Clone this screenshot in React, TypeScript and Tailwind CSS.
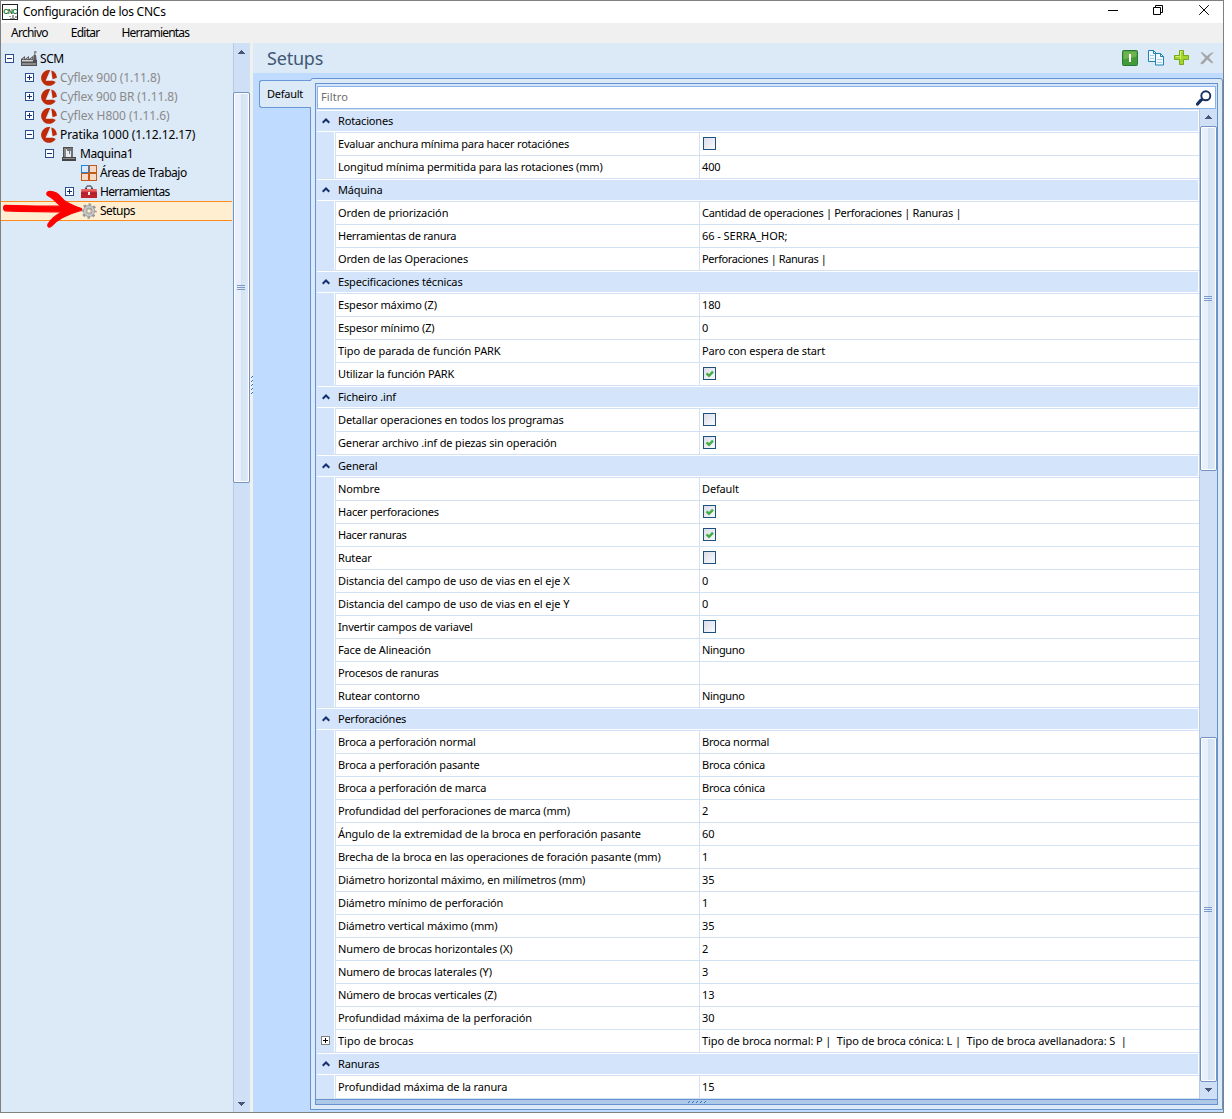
import type { ReactNode } from "react";

type Row = {
  label: string;
  value?: string;
  check?: boolean;
  header?: boolean;
  expand?: boolean;
  labelClass?: string;
  valueClass?: string;
};

const rows: Row[] = [
  { label: "Rotaciones", header: true },
  {
    label: "Evaluar anchura mínima para hacer rotaciónes",
    check: false,
    labelClass: "tracking-[-0.22px]",
  },
  { label: "Longitud mínima permitida para las rotaciones (mm)", value: "400" },
  { label: "Máquina", header: true },
  {
    label: "Orden de priorización",
    value: "Cantidad de operaciones | Perforaciones | Ranuras |",
    labelClass: "tracking-[-0.1px]",
    valueClass: "tracking-[-0.3px] word-spacing-0",
  },
  {
    label: "Herramientas de ranura",
    value: "66 - SERRA_HOR;",
    labelClass: "tracking-[-0.27px]",
    valueClass: "tracking-[-0.05px]",
  },
  {
    label: "Orden de las Operaciones",
    value: "Perforaciones | Ranuras |",
    valueClass: "tracking-[-0.4px]",
  },
  { label: "Especificaciones técnicas", header: true },
  { label: "Espesor máximo (Z)", value: "180" },
  { label: "Espesor mínimo (Z)", value: "0" },
  {
    label: "Tipo de parada de función PARK",
    value: "Paro con espera de start",
    labelClass: "tracking-[-0.07px]",
    valueClass: "tracking-[-0.11px]",
  },
  { label: "Utilizar la función PARK", check: true },
  { label: "Ficheiro .inf", header: true },
  { label: "Detallar operaciones en todos los programas", check: false },
  { label: "Generar archivo .inf de piezas sin operación", check: true },
  { label: "General", header: true },
  { label: "Nombre", value: "Default" },
  { label: "Hacer perforaciones", check: true, labelClass: "tracking-[-0.2px]" },
  { label: "Hacer ranuras", check: true, labelClass: "tracking-[-0.35px]" },
  { label: "Rutear", check: false },
  {
    label: "Distancia del campo de uso de vias en el eje X",
    value: "0",
    labelClass: "tracking-[-0.08px]",
  },
  {
    label: "Distancia del campo de uso de vias en el eje Y",
    value: "0",
    labelClass: "tracking-[-0.08px]",
  },
  { label: "Invertir campos de variavel", check: false, labelClass: "tracking-[-0.2px]" },
  { label: "Face de Alineación", value: "Ninguno", valueClass: "tracking-[-0.35px]" },
  { label: "Procesos de ranuras", value: "", labelClass: "tracking-[-0.22px]" },
  {
    label: "Rutear contorno",
    value: "Ninguno",
    labelClass: "tracking-[-0.2px]",
    valueClass: "tracking-[-0.35px]",
  },
  { label: "Perforaciónes", header: true, labelClass: "tracking-[-0.25px]" },
  { label: "Broca a perforación normal", value: "Broca normal", valueClass: "tracking-[-0.22px]" },
  { label: "Broca a perforación pasante", value: "Broca cónica", valueClass: "tracking-[-0.2px]" },
  { label: "Broca a perforación de marca", value: "Broca cónica", valueClass: "tracking-[-0.2px]" },
  { label: "Profundidad del perforaciones de marca (mm)", value: "2" },
  {
    label: "Ángulo de la extremidad de la broca en perforación pasante",
    value: "60",
    labelClass: "tracking-[-0.11px]",
  },
  {
    label: "Brecha de la broca en las operaciones de foración pasante (mm)",
    value: "1",
    labelClass: "tracking-[-0.12px]",
  },
  {
    label: "Diámetro horizontal máximo, en milímetros (mm)",
    value: "35",
    labelClass: "tracking-[-0.19px]",
  },
  { label: "Diámetro mínimo de perforación", value: "1" },
  { label: "Diámetro vertical máximo (mm)", value: "35" },
  {
    label: "Numero de brocas horizontales (X)",
    value: "2",
    labelClass: "tracking-[-0.12px]",
  },
  { label: "Numero de brocas laterales (Y)", value: "3" },
  { label: "Número de brocas verticales (Z)", value: "13" },
  { label: "Profundidad máxima de la perforación", value: "30" },
  {
    label: "Tipo de brocas",
    value: "Tipo de broca normal: P |  Tipo de broca cónica: L |  Tipo de broca avellanadora: S  |",
    expand: true,
    labelClass: "tracking-[0px]",
    valueClass: "tracking-[-0.1px]",
  },
  { label: "Ranuras", header: true },
  { label: "Profundidad máxima de la ranura", value: "15", labelClass: "tracking-[-0.15px]" },
];

function Expander({ open, gray }: { open?: boolean; gray?: boolean }) {
  return (
    <svg width="9" height="9" viewBox="0 0 9 9" shapeRendering="crispEdges">
      <rect x="0.5" y="0.5" width="8" height="8" fill="#fff" stroke={gray ? "#808080" : "#2a4f90"} />
      <path d="M2 4h5v1H2z" fill={gray ? "#000" : "#15306b"} />
      {!open && <path d="M4 2h1v5H4z" fill={gray ? "#000" : "#15306b"} />}
    </svg>
  );
}

function FactoryIcon() {
  return (
    <svg width="16" height="16" viewBox="0 0 16 16">
      <path d="M13 0h2.500v2h-1v2H13z" fill="#8e8e8e" />
      <path d="M12.500 4H15l.8 6h-3.600z" fill="#5b5b5b" />
      <path d="M0 8l4-3v3l4-3v3l4-3v4h4v6H0z" fill="#505050" />
      <path d="M1 8.200l2.300-1.700v1.700zM5 8.200l2.300-1.700v1.700zM9 8.200l2.300-1.700v1.700z" fill="#c5c5c5" />
      <path d="M1 9h11v1.500H1z" fill="#d0d0d0" />
      <path d="M1 12h14v2H1z" fill="#8c8c8c" />
    </svg>
  );
}

function ScmIcon() {
  return (
    <svg width="16" height="16" viewBox="0 0 16 16">
      <path d="M9.200.1A7.900 7.900 0 1 0 14.800 12L12 10.800H4.600z" fill="#bd2b08" />
      <path d="M10.300.4A8 8 0 0 1 15.900 7.800L11.600 9.300z" fill="#bd2b08" />
      <path d="M9.600 3.800L5.800 10.200 11 9.900z" fill="#f3f6fb" />
    </svg>
  );
}

function MachineIcon() {
  return (
    <svg width="16" height="16" viewBox="0 0 16 16">
      <path d="M2 1h10v2H5v8H2z" fill="#505050" />
      <path d="M3 2h2v9H3z" fill="#858585" />
      <path d="M5 3h4v8H5z" fill="#e9edf1" />
      <path d="M6 2h5v3H9v3H8V5H6z" fill="#777" />
      <path d="M10 2h2v9h-2z" fill="#707070" />
      <path d="M1 11h14v4H1z" fill="#454545" />
      <path d="M2 12h12v1H2z" fill="#8b8b8b" />
    </svg>
  );
}

function AreasIcon() {
  return (
    <svg width="16" height="16" viewBox="0 0 16 16" shapeRendering="crispEdges" fill="#f8d9c5" stroke="#c45a16">
      <path d="M8.500.5h7v7h-7zM.5 8.500h7v7h-7zM8.500 8.500h7v7h-7z" />
      <path d="M.5.5h7v7h-7z" fill="#d7eaff" stroke="#2483db" />
    </svg>
  );
}

function ToolboxIcon() {
  return (
    <svg width="16" height="14" viewBox="0 0 16 14">
      <path d="M5 4V2.500L6.500 1h3L11 2.500V4" fill="none" stroke="#5f686e" strokeWidth="1.300" />
      <path d="M4 3h2v1H4zM10 3h2v1h-2z" fill="#444" />
      <path d="M.5 4h15l.5 4H0z" fill="#dd4444" />
      <path d="M1 4.500h14v1H1z" fill="#ef8580" />
      <path d="M0 8h16v5H0z" fill="#c0222b" />
      <path d="M0 7.500h16v.8H0z" fill="#8e1019" />
      <path d="M7 7h2v3H7z" fill="#eee" />
    </svg>
  );
}

function GearIcon() {
  return (
    <svg width="16" height="16" viewBox="0 0 16 16" fill="none">
      <circle cx="8" cy="8" r="6.500" stroke="#999" strokeWidth="2.400" strokeDasharray="2.500 2.600" strokeDashoffset="1.250" />
      <circle cx="8" cy="8" r="4.300" stroke="#919191" strokeWidth="3.400" />
      <circle cx="8" cy="8" r="4.300" stroke="#c6c6c6" strokeWidth="2.200" />
      <circle cx="8" cy="8" r="2.100" fill="#fff0d4" stroke="#8b8b8b" strokeWidth=".7" />
    </svg>
  );
}

type Node = {
  label: string;
  icon: ReactNode;
  pad: string;
  text: string;
  state?: "open" | "closed";
  dim?: boolean;
  selected?: boolean;
};

const nodes: Node[] = [
  { label: "SCM", icon: <FactoryIcon />, pad: "pl-1", state: "open", text: "tracking-[-0.4px]" },
  { label: "Cyflex 900 (1.11.8)", icon: <ScmIcon />, pad: "pl-6", state: "closed", dim: true, text: "tracking-[-0.08px]" },
  { label: "Cyflex 900 BR (1.11.8)", icon: <ScmIcon />, pad: "pl-6", state: "closed", dim: true, text: "tracking-[-0.12px]" },
  { label: "Cyflex H800 (1.11.6)", icon: <ScmIcon />, pad: "pl-6", state: "closed", dim: true, text: "tracking-[-0.05px]" },
  { label: "Pratika 1000 (1.12.12.17)", icon: <ScmIcon />, pad: "pl-6", state: "open", text: "tracking-[-0.1px]" },
  { label: "Maquina1", icon: <MachineIcon />, pad: "pl-11", state: "open", text: "tracking-[-0.4px]" },
  { label: "Áreas de Trabajo", icon: <AreasIcon />, pad: "pl-16", text: "tracking-[-0.45px]" },
  { label: "Herramientas", icon: <ToolboxIcon />, pad: "pl-16", state: "closed", text: "tracking-[-0.65px]" },
  { label: "Setups", icon: <GearIcon />, pad: "pl-16", selected: true, text: "tracking-[-0.55px]" },
];

function TreeNode({ node }: { node: Node }) {
  return (
    <li
      className={`flex items-center ${node.pad} ${
        node.selected ? "h-5 border-y border-[#ff8c1a] bg-[#ffefd0]" : "h-[19px]"
      }`}
    >
      <span className="w-4 shrink-0">{node.state && <Expander open={node.state === "open"} />}</span>
      <span className="flex w-[19px] shrink-0 items-center">{node.icon}</span>
      <span
        className={`text-[12px] leading-[18px] whitespace-pre ${node.dim ? "text-[#8a8a8a]" : "text-black"} ${node.text}`}
      >
        {node.label}
      </span>
    </li>
  );
}

function Arrow({ down }: { down?: boolean }) {
  return (
    <svg width="7" height="4" viewBox="0 0 7 4" fill="#495677" shapeRendering="crispEdges">
      {down ? <path d="M0 0h7v1H6v1H5v1H4v1H3V3H2V2H1V1H0z" /> : <path d="M3 0h1v1h1v1h1v1h1v1H0V3h1V2h1V1h1z" />}
    </svg>
  );
}

function Thumb({ size }: { size: string }) {
  return (
    <div
      className={`flex w-[17px] shrink-0 items-center justify-center rounded-[2px] border border-[#7593c0] bg-[linear-gradient(90deg,#fff_1px,#eaf1fc_1px,#e6effb_7px,#d3e2f3_7px,#dfe9f7_14px,#fff_14px)] pr-px shadow-[inset_0_1px_#fff,inset_0_-1px_#fff] ${size}`}
    >
      <div className="h-[5px] w-2 bg-[repeating-linear-gradient(#7c99c9_0_1px,transparent_1px_2px)]" />
    </div>
  );
}

function CheckBox({ checked }: { checked: boolean }) {
  return (
    <svg width="13" height="13" viewBox="0 0 13 13">
      <defs>
        <linearGradient id="box" x1="0" y1="0" x2="1" y2="1">
          <stop offset="0" stopColor="#d9dde9" />
          <stop offset="1" stopColor="#fbfbfd" />
        </linearGradient>
      </defs>
      <rect x="0.5" y="0.5" width="12" height="12" fill="url(#box)" stroke="#1c5180" />
      {checked && <path d="M3.600 6.400l2.400 2.400 4-4.200" fill="none" stroke="#45ad45" strokeWidth="2.500" />}
    </svg>
  );
}

function GridRow({ row }: { row: Row }) {
  if (row.header) {
    return (
      <div className="flex h-[23px] border-t border-[#d3e1f5] bg-white py-px pr-px">
        <div className="flex grow items-center bg-[#d4e5fb]">
          <span className="flex w-[21px] justify-center pr-[3px]">
            <svg width="8" height="6" viewBox="0 0 8 6" fill="none" stroke="#15306b" strokeWidth="2">
              <path d="M.7 4.800L4 1.500l3.300 3.300" />
            </svg>
          </span>
          <span className={row.labelClass}>{row.label}</span>
        </div>
      </div>
    );
  }
  return (
    <div className="flex h-[23px] bg-white">
      <div className="flex w-[17px] shrink-0 items-center justify-center bg-[#d4e5fb]">
        {row.expand && <Expander gray />}
      </div>
      <div className="ml-px flex grow border-t border-l border-[#d3e1f5]">
        <div
          className={`flex w-[364px] shrink-0 items-center border-r border-[#d3e1f5] pl-0.5 whitespace-pre ${row.labelClass ?? ""}`}
        >
          {row.label}
        </div>
        <div className={`flex items-center pl-0.5 whitespace-pre ${row.valueClass ?? ""}`}>
          {row.check !== undefined ? (
            <span className="pb-px pl-px">
              <CheckBox checked={row.check} />
            </span>
          ) : (
            row.value
          )}
        </div>
      </div>
    </div>
  );
}

function TitleBar() {
  return (
    <div className="flex h-[22px] shrink-0 items-center bg-white">
      <div className="ml-px flex h-4 w-4 flex-col border border-[#222] bg-white">
        <span className="-mx-px pt-[3px] text-center font-['Liberation_Sans'] text-[7px] leading-[7px] font-bold tracking-[-0.5px] text-[#0a6a1c]">
          CNC
        </span>
        <svg width="8" height="4" viewBox="0 0 8 4" className="self-end">
          <path d="M0 1h2v1H0zM3 0h2v4H3zM6 1h2v2H6zM1 3h5v1H1z" fill="#9a9a9a" />
        </svg>
      </div>
      <span className="grow pl-[5px] text-[12px] tracking-[-0.25px]">Configuración de los CNCs</span>
      <svg width="122" height="22" viewBox="1101 1 122 22" fill="none" stroke="#000" className="shrink-0">
        <path d="M1108 10.500h10" />
        <path d="M1153.500 7.500h7v7h-7zM1155.500 7.500v-2h7v7h-2" />
        <path d="M1199.200 5.200l9.600 9.600M1208.800 5.200l-9.600 9.600" />
      </svg>
    </div>
  );
}

function Toolbar() {
  return (
    <div className="flex items-center gap-2.5 pr-[9px]">
      <svg width="16" height="16" viewBox="0 0 16 16">
        <rect x=".5" y=".5" width="15" height="15" rx="1" fill="#429a38" stroke="#237b35" />
        <path d="M1.500 1.500h13v5l-13 3z" fill="#6fb350" />
        <path d="M7 4h2v8H7z" fill="#fff" />
      </svg>
      <svg width="16" height="16" viewBox="0 0 16 16" fill="#eff9ff" stroke="#2081b0">
        <path d="M.5.5h5l3 3v8h-8z" />
        <path d="M5.500.5v3h3" fill="none" />
        <path d="M2 5.500h4M2 8.500h4" stroke="#a9cde0" />
        <path d="M7.500 3.500h5l3 3v8.500h-8z" />
        <path d="M12.500 3.500v3h3" fill="none" />
        <path d="M9 9.500h5M9 12.500h5" stroke="#a9cde0" />
      </svg>
      <svg width="16" height="16" viewBox="0 0 16 16">
        <path d="M5.500.5h4v5h5v4h-5v5h-4v-5h-5v-4h5z" fill="#a4d42b" stroke="#72a91e" />
        <path d="M6.500 9V1.500h2M5.500 6.500h-4" fill="none" stroke="#d3ef72" />
      </svg>
      <svg width="14" height="14" viewBox="0 0 14 14" fill="#a3a3a3" stroke="#a3a3a3" strokeWidth=".5">
        <path d="M1 1.500C2 1.200 3 1.800 3.600 2.500L7 5.500C9 3.500 11 2 13.300 1.600 11.500 3 10 4.800 8.600 6.700L13 11.500C12 12.200 11.500 12 10.800 11.300L7.200 8.200 3.500 12.300C2.500 13.200 1 13 .6 12.200L5.500 6.900z" />
      </svg>
    </div>
  );
}

export default function App() {
  return (
    <div className="h-[1119px] w-[1232px] bg-white font-['Noto_Sans',sans-serif] text-black">
      <div className="relative flex h-[1113px] w-[1224px] flex-col border border-[#808080]">
        <TitleBar />
        <nav className="flex h-5 shrink-0 items-center gap-[23px] bg-[#f0f0f0] pl-2.5 text-[12px] tracking-[-0.75px]">
          <span>Archivo</span>
          <span>Editar</span>
          <span className="-ml-px tracking-[-0.8px]">Herramientas</span>
        </nav>
        <div className="flex min-h-0 grow bg-[#f0f0f0]">
          <aside className="flex w-[249px] shrink-0 bg-[#dce9f7]">
            <ul className="w-[231px] pt-1.5">
              {nodes.map((n) => (
                <TreeNode key={n.label} node={n} />
              ))}
            </ul>
            <div className="ml-px flex w-[17px] shrink-0 flex-col items-center bg-[#cfdff5] shadow-[inset_1px_0_#b6cbe8]">
              <div className="flex h-[49px] shrink-0 pt-[7px]">
                <Arrow />
              </div>
              <Thumb size="h-[391px]" />
              <div className="mt-auto pb-[6px]">
                <Arrow down />
              </div>
            </div>
          </aside>
          <div className="flex w-[3px] shrink-0 items-center justify-end">
            <svg width="2" height="18" viewBox="0 0 2 18" className="mb-[386px]" fill="#3173bd" shapeRendering="crispEdges">
              <path d="M1 0h1v1H1zM0 1h1v1H0zM1 4h1v1H1zM0 5h1v1H0zM1 8h1v1H1zM0 9h1v1H0zM1 12h1v1H1zM0 13h1v1H0zM1 16h1v1H1zM0 17h1v1H0z" />
            </svg>
          </div>
          <main className="flex min-w-0 grow flex-col bg-[#bfdbff]">
            <div className="flex h-[30px] shrink-0 items-center justify-between bg-[#dce9f7] pl-3.5">
              <h1 className="text-[18px] tracking-[-0.2px] text-[#405875]">Setups</h1>
              <Toolbar />
            </div>
            <div className="flex min-h-0 grow pl-[6px] text-[11px] tracking-[-0.15px]">
              <div className="z-10 mt-[7px] -mr-px flex h-7 w-[52px] shrink-0 items-center rounded-l-[3px] border border-r-0 border-[#6a97d8] bg-[#dce9f7] pl-[7px] tracking-[-0.25px]">
                Default
              </div>
              <div className="mt-[5px] mb-0.5 flex min-w-0 grow rounded-t-[3px] border border-[#6593cf] bg-[#dce9f7] p-1">
                <div className="flex min-w-0 grow flex-col border border-[#6593cf] bg-[#d4e5fb]">
                  <div className="mx-px mt-0.5 flex h-[23px] shrink-0 items-center justify-between border border-[#8cb3e6] bg-white px-[3px] tracking-[0.1px] text-[#6e6e6e]">
                    Filtro
                    <svg width="16" height="16" viewBox="0 0 16 16" fill="none" stroke="#16305f">
                      <circle cx="9.800" cy="5.800" r="4.500" strokeWidth="1.900" />
                      <path d="M6.500 9.200L5 10.700" strokeWidth="2" />
                      <path d="M5 10.200L1.500 14" strokeWidth="3.200" strokeLinecap="round" />
                    </svg>
                  </div>
                  <div className="flex min-h-0 grow pl-px">
                    <div className="flex min-w-0 grow flex-col border-b border-[#d3e1f5]">
                      {rows.map((r) => (
                        <GridRow key={r.label} row={r} />
                      ))}
                    </div>
                    <div className="flex w-[18px] shrink-0 flex-col items-center border-l border-[#b6cbe8] bg-[#cfdff5]">
                      <div className="flex h-[17px] shrink-0 pt-[6px]">
                        <Arrow />
                      </div>
                      <Thumb size="h-[345px]" />
                      <div className="h-[266px] shrink-0" />
                      <Thumb size="h-[345px]" />
                      <div className="pt-[6px]">
                        <Arrow down />
                      </div>
                    </div>
                  </div>
                  <div className="flex h-[5px] shrink-0 items-center justify-center border-t border-[#6593cf] bg-[#aec8e8]">
                    <svg width="18" height="2" viewBox="0 0 18 2" fill="#3173bd" shapeRendering="crispEdges" className="ml-[-140px]">
                      <path d="M1 0h1v1H1zM0 1h1v1H0zM5 0h1v1H5zM4 1h1v1H4zM9 0h1v1H9zM8 1h1v1H8zM13 0h1v1h-1zM12 1h1v1h-1zM17 0h1v1h-1zM16 1h1v1h-1z" />
                    </svg>
                  </div>
                </div>
              </div>
            </div>
          </main>
        </div>
        {/* hand-drawn pointer over the selected node */}
        <svg
          width="84"
          height="40"
          viewBox="1 190 84 40"
          className="absolute top-[189px] left-0"
          fill="#fe0000"
          stroke="#fe0000"
          strokeWidth="1.2"
          strokeLinejoin="round"
        >
          <path d="M5 205.300C3 206 3 210 5 210.800C25 211.500 45 211.500 62 212C56 215 51 219 48 224C47 227 49 228 51.500 226C58 219 70 213.500 81 210.500L81.500 208.500C74 206 65 203 59 195C56 192 50 190.900 48 191.800C46 193 46.500 195 48.500 196C54 199 58 204 61 206C45 206.500 25 205.800 5 205.300z" />
        </svg>
      </div>
    </div>
  );
}
